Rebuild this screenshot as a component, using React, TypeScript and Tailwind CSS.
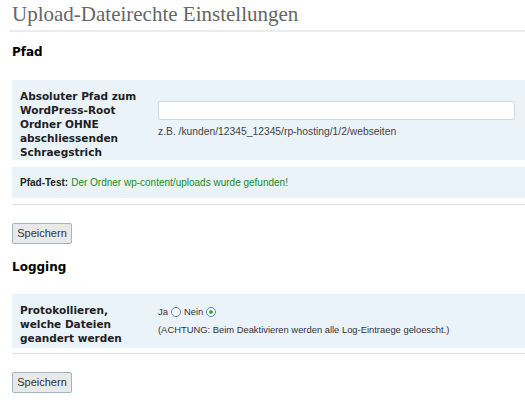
import React from 'react';

const sans = "font-['DejaVu_Sans',sans-serif]";
const small = "font-['Liberation_Sans',sans-serif]";

function Radio({ checked }: { checked?: boolean }) {
  return (
    <span className="inline-flex items-center justify-center w-[10px] h-[10px] rounded-full border border-[#5a86bd] bg-white mx-[3px] align-[-1px]">
      {checked && <span className="w-[4px] h-[4px] rounded-full bg-[#2fb52f]" />}
    </span>
  );
}

function SaveButton() {
  return (
    <button className={`${small} text-[11px] text-[#333] bg-[#e9e9e9] border border-[#9fb6c8] rounded-[2px] w-[60px] h-[21px] leading-none`}>
      Speichern
    </button>
  );
}

export default function App() {
  return (
    <div className="w-[525px] h-[413px] bg-white overflow-hidden pl-[9px]">
      <h2 className="font-['Liberation_Serif',serif] text-[21px] leading-none text-[#666] pl-[3px] pt-[4px] pb-[5px] border-b-2 border-[#ececec]">
        Upload-Dateirechte Einstellungen
      </h2>

      <div className="pl-[3px]">
        <h3 className={`${sans} font-bold text-[12px] text-black leading-none pt-[14px] pb-[22px]`}>Pfad</h3>

        <div className="border-b border-[#dfdfdf]">
          <div className="flex items-center bg-[#eaf2fa] h-[80px]">
            <div className={`${sans} font-bold text-[10.5px] leading-[14px] text-[#222] w-[146px] pl-[8px] pt-[9px] self-start`}>
              Absoluter Pfad zum<br />WordPress-Root<br />Ordner OHNE<br />abschliessenden<br />Schraegstrich
            </div>
            <div className="flex-1 pr-[10px] flex flex-col">
              <input className="h-[19px] bg-white border border-[#cbd9e6] rounded-[2px] outline-none" />
              <span className={`${small} text-[10.3px] text-[#444] pt-[4px]`}>z.B. /kunden/12345_12345/rp-hosting/1/2/webseiten</span>
            </div>
          </div>
          <div className="h-[7px]" />
          <div className={`flex items-center bg-[#eaf2fa] h-[31px] pl-[8px] ${small} text-[10px]`}>
            <span className="font-bold text-[#222] mr-[3px]">Pfad-Test:</span>
            <span className="text-[#1a8a1a]">Der Ordner wp-content/uploads wurde gefunden!</span>
          </div>
          <div className="h-[6px]" />
        </div>

        <div className="pt-[14px]">
          <SaveButton />
        </div>

        <h3 className={`${sans} font-bold text-[12px] text-black leading-none pt-[17px] pb-[21px]`}>Logging</h3>

        <div className="border-b border-[#dfdfdf]">
          <div className="flex items-center bg-[#eaf2fa] h-[54px]">
            <div className={`${sans} font-bold text-[10.5px] leading-[14px] text-[#222] w-[146px] pl-[8px] pt-[9px] self-start`}>
              Protokollieren,<br />welche Dateien<br />geandert werden
            </div>
            <div className={`flex-1 flex flex-col ${small} text-[9.4px] text-[#333]`}>
              <div className="flex items-center">
                <span>Ja</span>
                <Radio />
                <span>Nein</span>
                <Radio checked />
              </div>
              <span className="pt-[3px]">(ACHTUNG: Beim Deaktivieren werden alle Log-Eintraege geloescht.)</span>
            </div>
          </div>
          <div className="h-[5px]" />
        </div>

        <div className="pt-[14px]">
          <SaveButton />
        </div>
      </div>
    </div>
  );
}
